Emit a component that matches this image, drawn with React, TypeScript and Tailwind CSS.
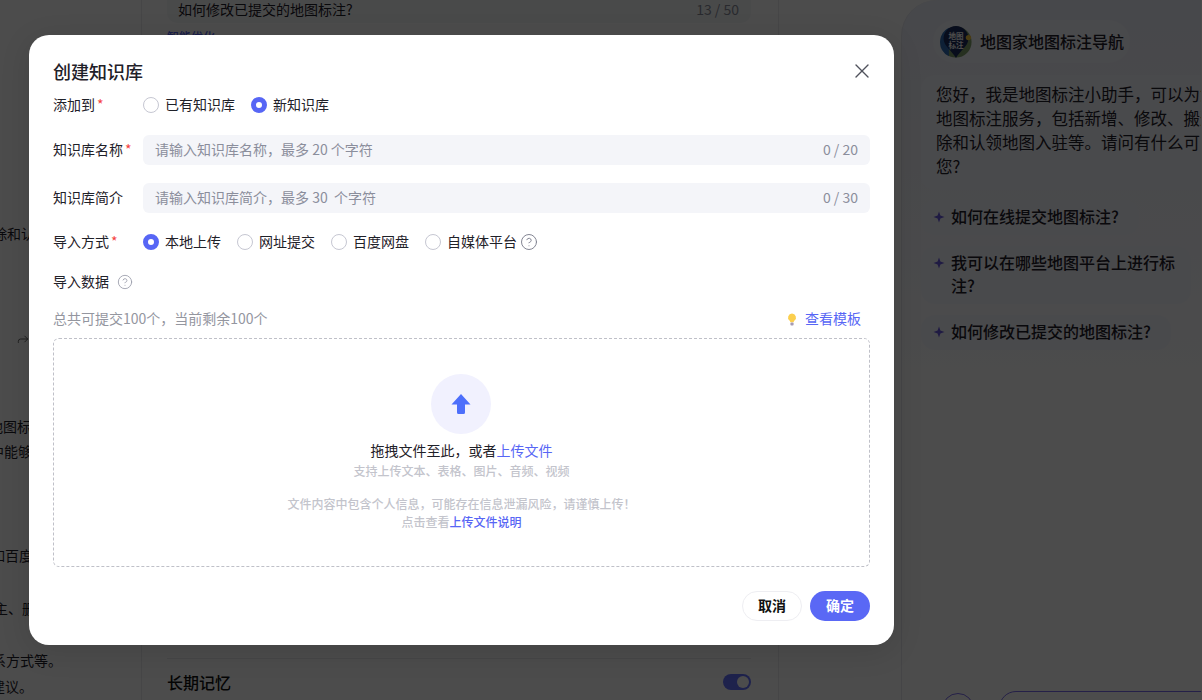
import { CircleHelp, Forward, X } from 'lucide-react'

const cjk = { fontFamily: '"Noto Sans CJK SC", "Noto Sans", sans-serif' }

function Radio({ label, checked }: { label: string; checked?: boolean }) {
  return (
    <label className="flex items-center gap-[6px] text-[14px] leading-[20px] text-[#1f2129]">
      {checked ? (
        <span className="w-4 h-4 rounded-full border-[5px] border-[#5766f5] bg-white" />
      ) : (
        <span className="w-4 h-4 rounded-full border border-[#c6c7d2] bg-white" />
      )}
      <span className="pb-[2px]">{label}</span>
    </label>
  )
}

function Label({ text, required }: { text: string; required?: boolean }) {
  return (
    <div className="w-[90px] shrink-0 pb-[2px] text-[14px] leading-[20px] text-[#1f2129] whitespace-nowrap">
      {text}
      {required && <span className="ml-[2px] text-[#f5423f]">*</span>}
    </div>
  )
}

function TextField({ placeholder, count }: { placeholder: string; count: string }) {
  return (
    <div className="flex-1 h-[30px] rounded-[6px] bg-[#f4f5f9] flex items-center justify-between pl-3 pr-3 pb-[2px] text-[14px] text-[#8b8e9c]">
      <span className="whitespace-pre">{placeholder}</span>
      <span>{count}</span>
    </div>
  )
}

function Sparkle() {
  return (
    <svg width="12" height="12" viewBox="0 0 12 12" className="shrink-0 mt-[6px]">
      <path d="M6 .5 7.4 4.6 11.5 6 7.4 7.4 6 11.5 4.6 7.4 .5 6 4.6 4.6Z" fill="#6a5ae0" />
    </svg>
  )
}

function Suggestion({ text, width }: { text: string; width: string }) {
  return (
    <div className={`flex gap-[6px] rounded-[14px] bg-[#f6f7fd] pl-[12px] pr-2 pt-[5px] pb-[7px] text-[16px] leading-[23px] font-medium text-[#1f2129] ${width}`}>
      <Sparkle />
      <span>{text}</span>
    </div>
  )
}

function Logo() {
  return (
    <svg width="32" height="32" viewBox="0 0 36 36" className="shrink-0">
      <circle cx="18" cy="18" r="17.5" fill="#7fa06b" />
      <path d="M0 18a18 18 0 0 1 10-16v32A18 18 0 0 1 0 18Z" fill="#2f6db5" />
      <path d="M4 14a14 14 0 0 1 28 0c0 9-10 14-14 22C14 28 4 23 4 14Z" fill="#1b2c5e" />
      <circle cx="32" cy="13" r="3" fill="#f5c63c" />
      <text x="18" y="15" textAnchor="middle" fontSize="8.5" fontWeight="700" fill="#fff" style={cjk}>地图</text>
      <text x="18" y="25" textAnchor="middle" fontSize="8.5" fontWeight="700" fill="#fff" style={cjk}>标注</text>
    </svg>
  )
}

function LeftColumn() {
  return (
    <div className="w-[141px] shrink-0 overflow-hidden text-[14px] text-[#1f2129] whitespace-nowrap">
      <div className="flex flex-col">
        <div className="h-[221px]" />
        <div className="h-6 leading-6 -ml-[7px]">除和认领地图</div>
        <div className="h-[87px]" />
        <div className="h-[14px] pl-[16px]">
          <Forward size={14} strokeWidth={1.5} className="text-[#555]" />
        </div>
        <div className="h-[68px]" />
        <div className="h-6 leading-6 -ml-[11px]">地图标注服务</div>
        <div className="h-px" />
        <div className="h-6 leading-6 -ml-[10px]">中能够快速</div>
        <div className="h-[80px]" />
        <div className="h-6 leading-6 -ml-[9px]">如百度地图</div>
        <div className="h-[29px]" />
        <div className="h-6 leading-6 -ml-[6px]">主、删除</div>
        <div className="h-[28px]" />
        <div className="h-6 leading-6 -ml-[8px]">系方式等。</div>
        <div className="h-[2px]" />
        <div className="h-6 leading-6 -ml-[9px]">建议。</div>
      </div>
    </div>
  )
}

function MiddleColumn() {
  return (
    <div className="w-[638px] h-[720px] shrink-0 flex flex-col border-x border-[#e9e9ee] pl-[25px] pr-[27px]">
      <div className="h-[27px] -mt-[4px] shrink-0 rounded-b-[10px] bg-[#f6f7f9] flex items-center justify-between pl-[11px] pr-3 text-[14px] text-[#1f2129]">
        <span>如何修改已提交的地图标注?</span>
        <span className="text-[#8b8e9c]">13 / 50</span>
      </div>
      <div className="mt-[5px] h-[18px] text-[12px] leading-[18px] font-medium text-[#5766f5]">智能优化</div>
      <div className="h-[612px]" />
      <div className="border-t border-[#e9e9ee] pt-[11px] flex items-center justify-between">
        <span className="text-[16px] leading-6 font-medium text-[#111]">长期记忆</span>
        <span className="w-7 h-4 rounded-full bg-[#6672ff] flex items-center justify-end pr-[2px]">
          <span className="w-3 h-3 rounded-full bg-white" />
        </span>
      </div>
      <div className="mt-[3px] text-[13px] leading-[19px] text-[#666] whitespace-nowrap">开启后智能体将记住与用户的对话内容</div>
    </div>
  )
}

function RightColumn() {
  return (
    <div className="w-[300px] shrink-0 ml-[122px] border-l border-[#e6e7ee] rounded-tl-[36px] bg-gradient-to-b from-[#eef0fa] to-white to-60% pl-[19px] flex flex-col overflow-hidden">
      <div className="pt-[20px] pl-[12px] h-[75px] shrink-0">
        <div className="inline-flex items-center gap-2 h-[43px] pl-[7px] pr-[6px] rounded-[22px] bg-[#f6f7fd]">
          <Logo />
          <span className="pb-[2px] text-[16px] font-medium text-[#1f2129] whitespace-nowrap">地图家地图标注导航</span>
        </div>
      </div>
      <div className="w-[300px] shrink-0 rounded-[14px] bg-[#f6f7fd] pl-[15px] pt-[7px] text-[16.5px] leading-[24px] text-[#1f2129] h-[115px] whitespace-nowrap">
        您好，我是地图标注小助手，可以为您提供<br />
        地图标注服务，包括新增、修改、搬迁、删<br />
        除和认领地图入驻等。请问有什么可以帮到<br />
        您?
      </div>
      <div className="flex flex-col gap-[11px] mt-[10px] shrink-0">
        <Suggestion text="如何在线提交地图标注?" width="w-[218px]" />
        <Suggestion text="我可以在哪些地图平台上进行标注?" width="w-[270px]" />
        <Suggestion text="如何修改已提交的地图标注?" width="w-[250px]" />
      </div>
      <div className="flex-1" />
      <div className="flex gap-[25px] h-[7px] shrink-0 pl-[21px]">
        <span className="w-8 h-8 rounded-full border border-[#7c6cf0] shrink-0" />
        <span className="w-[300px] h-[34px] -mt-[2px] rounded-[17px] border border-[#7c6cf0] shrink-0" />
      </div>
    </div>
  )
}

function Bulb() {
  return (
    <svg width="10" height="13" viewBox="0 0 10 13">
      <path d="M5 0.5a4 4 0 0 1 2.5 7.1c-.5.5-.8 1-.8 1.6H3.3c0-.6-.3-1.1-.8-1.6A4 4 0 0 1 5 .5Z" fill="#fbcf4e" />
      <rect x="3.4" y="9.6" width="3.2" height="2.9" rx="1" fill="#a69bb4" />
    </svg>
  )
}

function UploadArrow() {
  return (
    <svg width="20" height="22" viewBox="0 0 20 22">
      <path d="M10 1 19.5 11.5H14V19.5a1.5 1.5 0 0 1-1.5 1.5h-5A1.5 1.5 0 0 1 6 19.5V11.5H.5Z" fill="#4d6ffb" />
    </svg>
  )
}

export default function App() {
  return (
    <div className="relative w-[1202px] h-[700px] overflow-hidden bg-white" style={cjk}>
      <div className="flex h-full">
        <LeftColumn />
        <MiddleColumn />
        <RightColumn />
      </div>

      <div className="absolute inset-0 bg-black/70 pl-[29px] pt-[35px]">
        <div className="w-[865px] h-[610px] rounded-[20px] bg-white px-6 shadow-[0_6px_30px_rgba(0,0,0,0.12)] flex flex-col">
          <div className="flex items-center justify-between pt-[22px] pb-[1px] h-[50px]">
            <h1 className="text-[18px] leading-[26px] font-medium text-[#1f2129]">创建知识库</h1>
            <X size={24} strokeWidth={1.4} className="text-[#50525c] -mr-[4px]" />
          </div>

          <div className="flex items-center mt-[10px] h-5">
            <Label text="添加到" required />
            <div className="flex gap-4">
              <Radio label="已有知识库" />
              <Radio label="新知识库" checked />
            </div>
          </div>

          <div className="flex items-center mt-[20px]">
            <Label text="知识库名称" required />
            <TextField placeholder="请输入知识库名称，最多 20 个字符" count="0 / 20" />
          </div>

          <div className="flex items-center mt-[18px]">
            <Label text="知识库简介" />
            <TextField placeholder="请输入知识库简介，最多 30  个字符" count="0 / 30" />
          </div>

          <div className="flex items-center mt-[19px] h-5">
            <Label text="导入方式" required />
            <div className="flex gap-4">
              <Radio label="本地上传" checked />
              <Radio label="网址提交" />
              <Radio label="百度网盘" />
              <div className="flex items-center gap-[3px]">
                <Radio label="自媒体平台" />
                <CircleHelp size={18} strokeWidth={1.3} className="text-[#7f8290]" />
              </div>
            </div>
          </div>

          <div className="flex items-center gap-[8px] mt-[20px] h-5 text-[14px] text-[#1f2129]">
            <span className="pb-[2px]">导入数据</span>
            <CircleHelp size={16} strokeWidth={1.3} className="text-[#9a9daa]" />
          </div>

          <div className="flex items-center justify-between mt-[17px] h-5 text-[14px]">
            <span className="pb-[2px] text-[#94969f]">总共可提交100个，当前剩余100个</span>
            <span className="flex items-center gap-[8px] pr-[9px] text-[#5766f5]">
              <Bulb />
              <span className="pb-[2px]">查看模板</span>
            </span>
          </div>

          <div className="mt-[9px] h-[229px] rounded-[6px] border border-dashed border-[#bfc0c8] flex flex-col items-center pt-[35px]">
            <div className="w-[60px] h-[60px] -ml-px rounded-full bg-[#f1f1fe] flex items-center justify-center">
              <UploadArrow />
            </div>
            <div className="mt-[6px] text-[14px] leading-[20px] text-[#1f2129]">
              拖拽文件至此，或者<span className="text-[#5766f5]">上传文件</span>
            </div>
            <div className="mt-[2px] text-[12px] leading-[18px] font-medium text-[#c3c4cc]">支持上传文本、表格、图片、音频、视频</div>
            <div className="mt-[15px] text-[12px] leading-[18px] font-medium text-[#c3c4cc]">文件内容中包含个人信息，可能存在信息泄漏风险，请谨慎上传！</div>
            <div className="text-[12px] leading-[18px] font-medium text-[#c3c4cc]">
              点击查看<span className="text-[#5766f5]">上传文件说明</span>
            </div>
          </div>

          <div className="flex justify-end gap-2 mt-[24px]">
            <button className="w-[60px] h-[30px] pb-[2px] rounded-full border border-[#eeeef2] bg-white text-[14px] font-bold text-[#111]">取消</button>
            <button className="w-[60px] h-[30px] pb-[2px] rounded-full bg-[#5a68f5] text-[14px] font-bold text-white">确定</button>
          </div>
        </div>
      </div>
    </div>
  )
}
